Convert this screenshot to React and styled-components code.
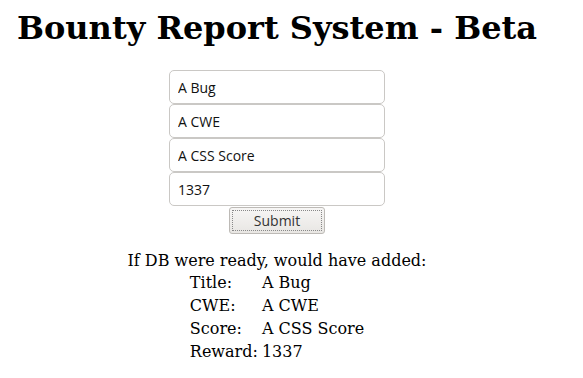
import React from "react";
import styled, { createGlobalStyle } from "styled-components";

const GlobalStyle = createGlobalStyle`
  body {
    margin: 0;
    background: #ffffff;
    color: #000000;
    font-family: "DejaVu Serif", serif;
  }
`;

const Page = styled.div`
  width: 554px;
  display: flex;
  flex-direction: column;
  align-items: center;
`;

const Title = styled.h1`
  margin: 10px 0 23px;
  font-size: 32px;
  line-height: 37px;
  font-weight: bold;
`;

const Form = styled.form`
  display: flex;
  flex-direction: column;
  align-items: center;
`;

const Field = styled.input`
  box-sizing: border-box;
  width: 216px;
  height: 34px;
  margin: 0;
  padding: 0 8px;
  border: 1px solid #cac8c5;
  border-radius: 5px;
  background: #ffffff;
  font-family: "Open Sans", sans-serif;
  font-size: 14px;
  color: #111;
  outline: none;
`;

const Button = styled.button`
  box-sizing: border-box;
  width: 96px;
  height: 27px;
  margin-top: 1px;
  border: 1px solid #bdbab6;
  border-radius: 3px;
  background: linear-gradient(#f7f6f5, #e8e6e3);
  font-family: "Open Sans", sans-serif;
  font-size: 14px;
  color: #333;
  padding: 0;
  outline: 1px dotted #888;
  outline-offset: -4px;
`;

const Result = styled.div`
  margin-top: 17px;
  text-align: center;
  font-size: 16px;
  line-height: 19px;
`;

const Table = styled.table`
  margin: 0 auto;
  border-spacing: 2px;
  text-align: left;
  font-size: 16px;

  td {
    padding: 1px;
    line-height: 19px;
  }
`;

const rows = [
  ["Title:", "A Bug"],
  ["CWE:", "A CWE"],
  ["Score:", "A CSS Score"],
  ["Reward:", "1337"],
];

export default function App() {
  return (
    <Page>
      <GlobalStyle />
      <Title>Bounty Report System - Beta</Title>
      <Form onSubmit={(e) => e.preventDefault()}>
        <Field defaultValue="A Bug" />
        <Field defaultValue="A CWE" />
        <Field defaultValue="A CSS Score" />
        <Field defaultValue="1337" />
        <Button type="submit">Submit</Button>
      </Form>
      <Result>
        If DB were ready, would have added:
        <Table>
          <tbody>
            {rows.map(([label, value]) => (
              <tr key={label}>
                <td>{label}</td>
                <td>{value}</td>
              </tr>
            ))}
          </tbody>
        </Table>
      </Result>
    </Page>
  );
}
